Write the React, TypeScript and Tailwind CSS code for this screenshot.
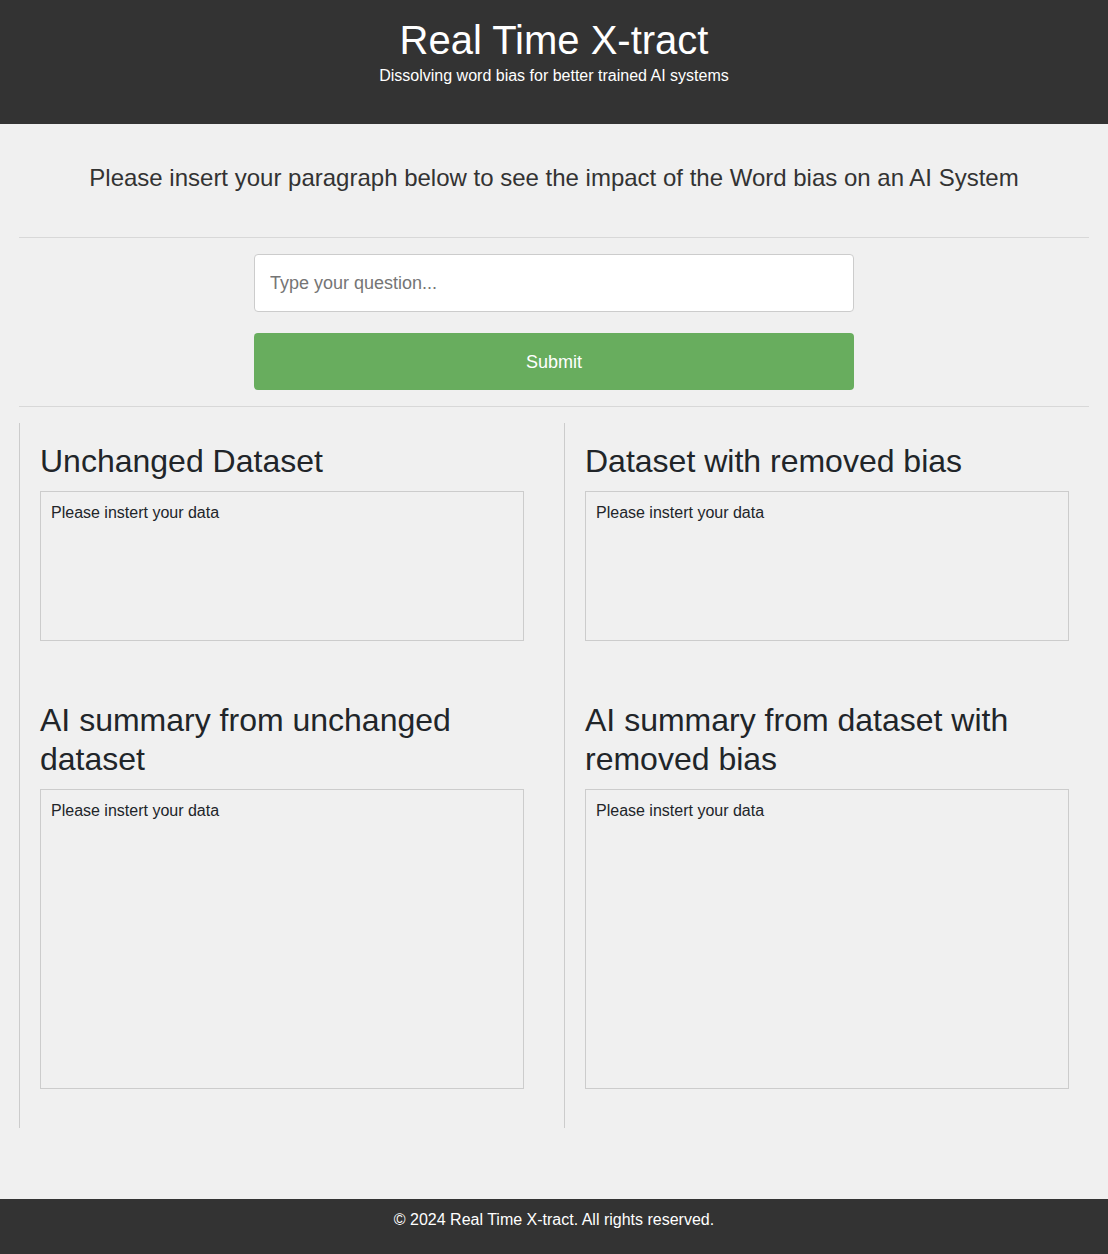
import { useState } from "react";

function Panel({ title, tall }: { title: string; tall?: boolean }) {
  return (
    <div>
      <h2 className="text-[32px] leading-[39px] text-[#212529] mb-[10px]">{title}</h2>
      <div
        className={`border border-[#cccccc] p-[10px] text-base leading-[22px] text-[#212529] ${
          tall ? "h-[300px]" : "h-[150px]"
        }`}
      >
        Please instert your data
      </div>
    </div>
  );
}

export default function App() {
  const [question, setQuestion] = useState("");

  return (
    <div className="min-h-[1254px] flex flex-col bg-[#f0f0f0] font-['Liberation_Sans',Arial,sans-serif]">
      <header className="h-[124px] bg-[#333333] text-white text-center pt-[16px]">
        <h1 className="text-[40px] leading-[48px]">Real Time X-tract</h1>
        <p className="text-base leading-[22px] mt-[1px]">Dissolving word bias for better trained AI systems</p>
      </header>

      <main className="flex-1 px-[19px] pb-[71px]">
        <p className="text-center text-2xl leading-[28px] text-[#333333] mt-[40px] mb-[45px]">
          Please insert your paragraph below to see the impact of the Word bias on an AI System
        </p>

        <hr className="border-0 border-t border-[#d8d8d8]" />

        <div className="w-[600px] mx-auto py-[16px] flex flex-col gap-[21px]">
          <input
            value={question}
            onChange={(e) => setQuestion(e.target.value)}
            placeholder="Type your question..."
            className="h-[58px] w-full bg-white border border-[#cccccc] rounded px-[15px] text-lg text-[#333333] placeholder:text-[#757575] outline-none"
          />
          <button className="h-[57px] w-full bg-[#68ad5e] text-white text-lg rounded">Submit</button>
        </div>

        <hr className="border-0 border-t border-[#d8d8d8]" />

        <div className="grid grid-cols-2 gap-[20px] mt-[16px]">
          <div className="border-l border-[#cccccc] px-[20px] pt-[19px] pb-[39px] flex flex-col gap-[60px]">
            <Panel title="Unchanged Dataset" />
            <Panel title="AI summary from unchanged dataset" tall />
          </div>
          <div className="border-l border-[#cccccc] px-[20px] pt-[19px] pb-[39px] flex flex-col gap-[60px]">
            <Panel title="Dataset with removed bias" />
            <Panel title="AI summary from dataset with removed bias" tall />
          </div>
        </div>
      </main>

      <footer className="h-[56px] bg-[#333333] text-white text-center pt-[10px]">
        <p className="text-base leading-[22px]">© 2024 Real Time X-tract. All rights reserved.</p>
      </footer>
    </div>
  );
}
